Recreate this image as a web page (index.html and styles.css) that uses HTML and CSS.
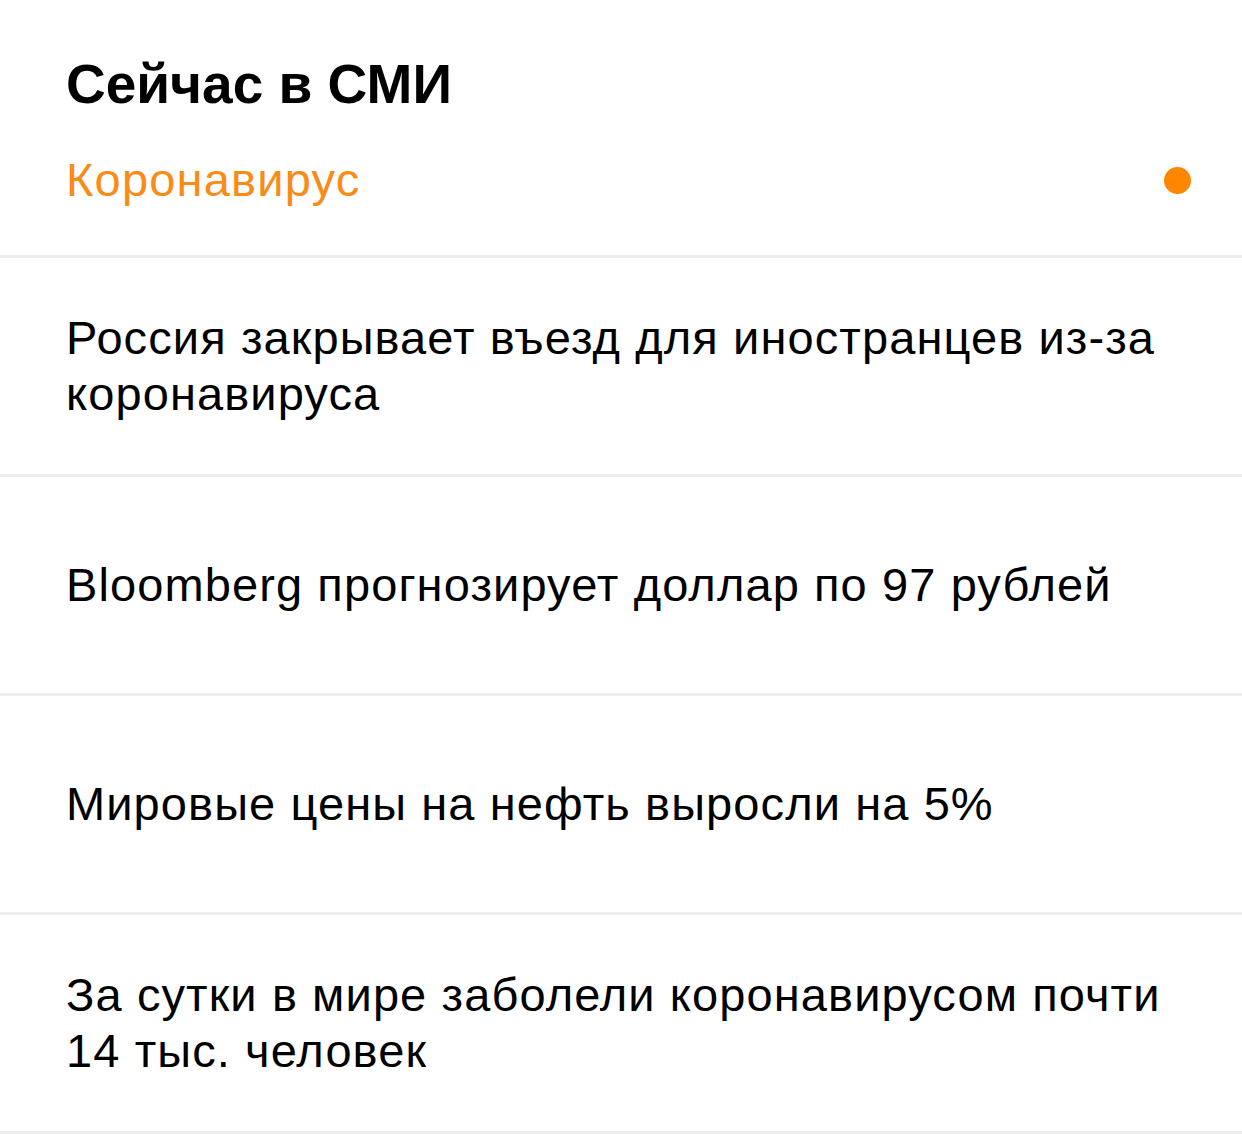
FILE: index.html
```html
<!DOCTYPE html>
<html lang="ru">
<head>
<meta charset="utf-8">
<title>Сейчас в СМИ</title>
<link rel="stylesheet" href="styles.css">
</head>
<body>

<div class="head">
  <h1 class="title">Сейчас в СМИ</h1>
  <div class="topic">
    <span class="topic-name">Коронавирус</span>
    <span class="dot"></span>
  </div>
</div>

<ul class="news">
  <li class="item">Россия закрывает въезд для иностранцев из-за коронавируса</li>
  <li class="item">Bloomberg прогнозирует доллар по 97 рублей</li>
  <li class="item">Мировые цены на нефть выросли на 5%</li>
  <li class="item">За сутки в мире заболели коронавирусом почти 14 тыс. человек</li>
</ul>

</body>
</html>
```

FILE: styles.css
```css
body {
  margin: 0;
  background: #ffffff;
  color: #000000;
  font-family: "Liberation Sans", Arial, Helvetica, sans-serif;
}

.head {
  padding: 52px 51px 47px 66px;
  border-bottom: 3px solid #eeeeee;
}
.title {
  margin: 0 0 36px 0;
  font-size: 55px;
  line-height: 64px;
  font-weight: bold;
}
.topic {
  display: flex;
  align-items: center;
  justify-content: space-between;
  font-size: 47px;
  line-height: 56px;
  letter-spacing: 1.2px;
  color: #f98c16;
}
.dot {
  width: 27px;
  height: 27px;
  border-radius: 50%;
  background: #ff8600;
}

.news { list-style: none; margin: 0; padding: 0; }
.item {
  display: flex;
  align-items: center;
  height: 216px;
  padding: 0 60px 0 66px;
  border-bottom: 3px solid #eeeeee;
  font-size: 47px;
  line-height: 56px;
  letter-spacing: 1.1px;
}
```
